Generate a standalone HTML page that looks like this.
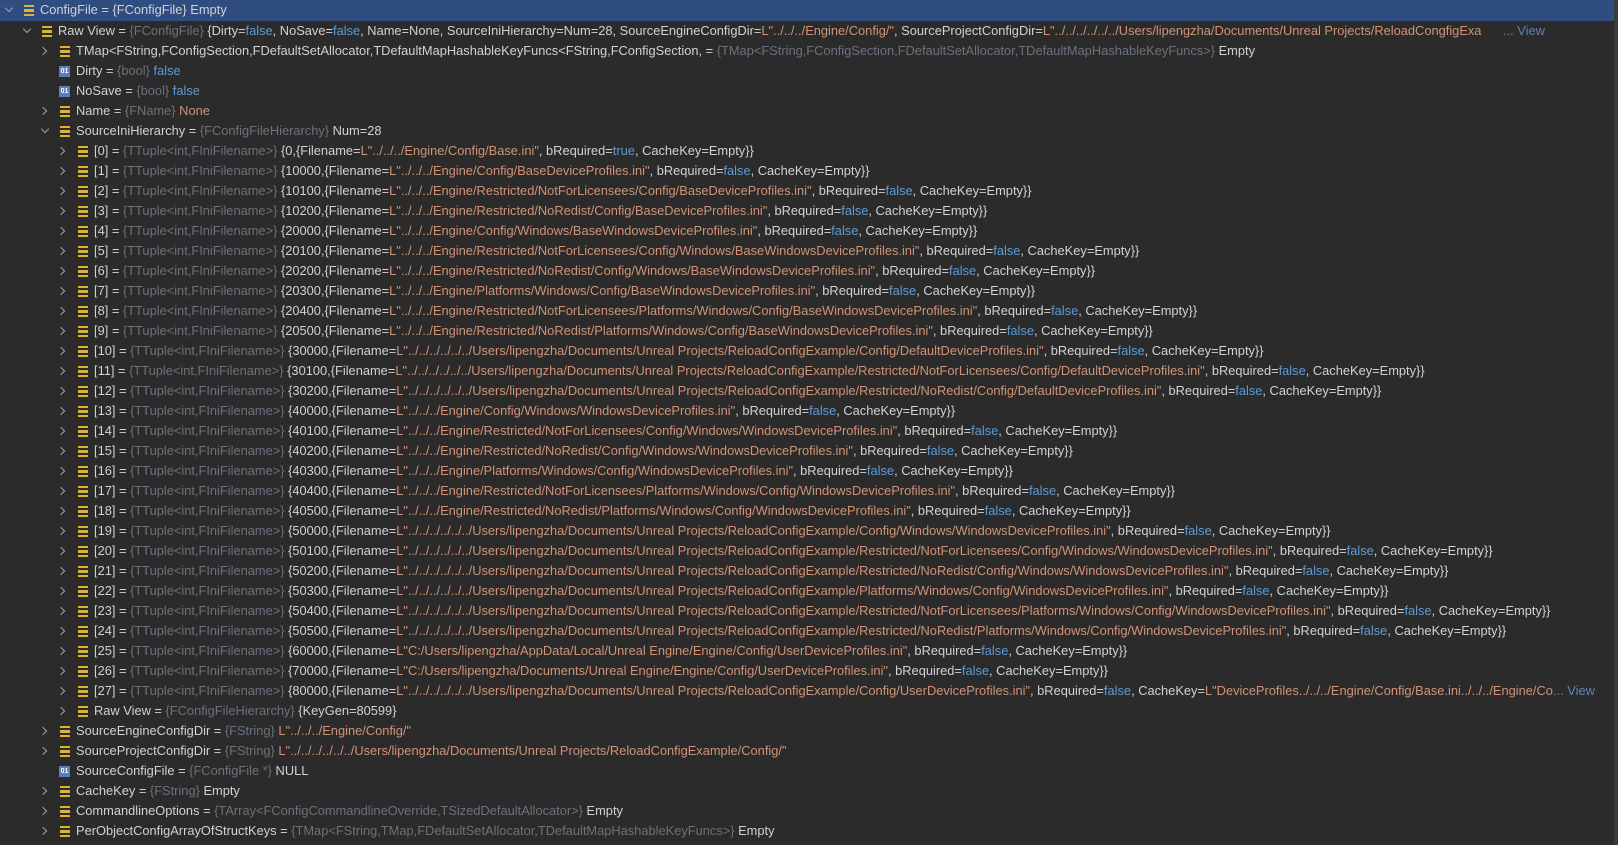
<!DOCTYPE html>
<html><head><meta charset="utf-8"><style>
html,body{margin:0;padding:0;background:#2b2b2b;width:1618px;height:845px;overflow:hidden}
body{font-family:"Liberation Sans","Noto Sans CJK SC",sans-serif;font-size:12.85px;color:#d2d2d2;position:relative}
.r{position:absolute;left:0;width:1614px;height:20px;line-height:20px;white-space:nowrap}
.sel{background:#2f4d80;height:21px;top:0}
.a{position:absolute;top:6px;width:7px;height:7px}
.a.c{border-right:1.5px solid #a0a0a0;border-bottom:1.5px solid #a0a0a0;transform:rotate(-45deg);width:5px;height:5px;top:7px}
.a.o{border-right:1.5px solid #a0a0a0;border-bottom:1.5px solid #a0a0a0;transform:rotate(45deg);width:5px;height:5px;top:5px}
.i{position:absolute;top:5px;width:10px;height:11px;background:linear-gradient(#d8b43a 0 2px,transparent 2px 4px,#d8b43a 4px 7px,transparent 7px 9px,#d8b43a 9px 11px)}
.b{position:absolute;top:5px;width:11px;height:11px;background:#5b7dbd;color:#fff;font-size:7px;line-height:11px;text-align:center;font-weight:bold}
.x{position:absolute;top:0}
.t{color:#6a727c}.k{color:#5e9bd4}.s{color:#cf9478}
.v{position:absolute;top:0;color:#5e84b3;padding-left:3px}
.edge{position:absolute;right:0;top:0;width:4px;height:845px;background:#3a3a3a}
</style></head><body>
<div class="r sel" style="top:0"><span class="a o" style="left:6px"></span><span class="i" style="left:24px"></span><span class="x" style="left:40px">ConfigFile = {FConfigFile} Empty</span></div>
<div class="r" style="top:21px"><span class="a o" style="left:24px"></span><span class="i" style="left:42px"></span><span class="x" style="left:58px;width:1446px;overflow:hidden">Raw View = <span class="t">{FConfigFile}</span> {Dirty=<span class="k">false</span>, NoSave=<span class="k">false</span>, Name=None, SourceIniHierarchy=Num=28, SourceEngineConfigDir=<span class="s">L"../../../Engine/Config/"</span>, SourceProjectConfigDir=<span class="s">L"../../../../../../Users/lipengzha/Documents/Unreal Projects/ReloadCongfigExa</span></span><span class="v" style="left:1500px">... View</span></div>
<div class="r" style="top:41px"><span class="a c" style="left:40px"></span><span class="i" style="left:60px"></span><span class="x" style="left:76px">TMap&lt;FString,FConfigSection,FDefaultSetAllocator,TDefaultMapHashableKeyFuncs&lt;FString,FConfigSection, = <span class="t">{TMap&lt;FString,FConfigSection,FDefaultSetAllocator,TDefaultMapHashableKeyFuncs&gt;}</span> Empty</span></div>
<div class="r" style="top:61px"><span class="b" style="left:59px">01</span><span class="x" style="left:76px">Dirty = <span class="t">{bool}</span> <span class="k">false</span></span></div>
<div class="r" style="top:81px"><span class="b" style="left:59px">01</span><span class="x" style="left:76px">NoSave = <span class="t">{bool}</span> <span class="k">false</span></span></div>
<div class="r" style="top:101px"><span class="a c" style="left:40px"></span><span class="i" style="left:60px"></span><span class="x" style="left:76px">Name = <span class="t">{FName}</span> <span class="s">None</span></span></div>
<div class="r" style="top:121px"><span class="a o" style="left:42px"></span><span class="i" style="left:60px"></span><span class="x" style="left:76px">SourceIniHierarchy = <span class="t">{FConfigFileHierarchy}</span> Num=28</span></div>
<div class="r" style="top:141px"><span class="a c" style="left:58px"></span><span class="i" style="left:78px"></span><span class="x" style="left:94px">[0] = <span class="t">{TTuple&lt;int,FIniFilename&gt;}</span> {0,{Filename=<span class="s">L"../../../Engine/Config/Base.ini"</span>, bRequired=<span class="k">true</span>, CacheKey=Empty}}</span></div>
<div class="r" style="top:161px"><span class="a c" style="left:58px"></span><span class="i" style="left:78px"></span><span class="x" style="left:94px">[1] = <span class="t">{TTuple&lt;int,FIniFilename&gt;}</span> {10000,{Filename=<span class="s">L"../../../Engine/Config/BaseDeviceProfiles.ini"</span>, bRequired=<span class="k">false</span>, CacheKey=Empty}}</span></div>
<div class="r" style="top:181px"><span class="a c" style="left:58px"></span><span class="i" style="left:78px"></span><span class="x" style="left:94px">[2] = <span class="t">{TTuple&lt;int,FIniFilename&gt;}</span> {10100,{Filename=<span class="s">L"../../../Engine/Restricted/NotForLicensees/Config/BaseDeviceProfiles.ini"</span>, bRequired=<span class="k">false</span>, CacheKey=Empty}}</span></div>
<div class="r" style="top:201px"><span class="a c" style="left:58px"></span><span class="i" style="left:78px"></span><span class="x" style="left:94px">[3] = <span class="t">{TTuple&lt;int,FIniFilename&gt;}</span> {10200,{Filename=<span class="s">L"../../../Engine/Restricted/NoRedist/Config/BaseDeviceProfiles.ini"</span>, bRequired=<span class="k">false</span>, CacheKey=Empty}}</span></div>
<div class="r" style="top:221px"><span class="a c" style="left:58px"></span><span class="i" style="left:78px"></span><span class="x" style="left:94px">[4] = <span class="t">{TTuple&lt;int,FIniFilename&gt;}</span> {20000,{Filename=<span class="s">L"../../../Engine/Config/Windows/BaseWindowsDeviceProfiles.ini"</span>, bRequired=<span class="k">false</span>, CacheKey=Empty}}</span></div>
<div class="r" style="top:241px"><span class="a c" style="left:58px"></span><span class="i" style="left:78px"></span><span class="x" style="left:94px">[5] = <span class="t">{TTuple&lt;int,FIniFilename&gt;}</span> {20100,{Filename=<span class="s">L"../../../Engine/Restricted/NotForLicensees/Config/Windows/BaseWindowsDeviceProfiles.ini"</span>, bRequired=<span class="k">false</span>, CacheKey=Empty}}</span></div>
<div class="r" style="top:261px"><span class="a c" style="left:58px"></span><span class="i" style="left:78px"></span><span class="x" style="left:94px">[6] = <span class="t">{TTuple&lt;int,FIniFilename&gt;}</span> {20200,{Filename=<span class="s">L"../../../Engine/Restricted/NoRedist/Config/Windows/BaseWindowsDeviceProfiles.ini"</span>, bRequired=<span class="k">false</span>, CacheKey=Empty}}</span></div>
<div class="r" style="top:281px"><span class="a c" style="left:58px"></span><span class="i" style="left:78px"></span><span class="x" style="left:94px">[7] = <span class="t">{TTuple&lt;int,FIniFilename&gt;}</span> {20300,{Filename=<span class="s">L"../../../Engine/Platforms/Windows/Config/BaseWindowsDeviceProfiles.ini"</span>, bRequired=<span class="k">false</span>, CacheKey=Empty}}</span></div>
<div class="r" style="top:301px"><span class="a c" style="left:58px"></span><span class="i" style="left:78px"></span><span class="x" style="left:94px">[8] = <span class="t">{TTuple&lt;int,FIniFilename&gt;}</span> {20400,{Filename=<span class="s">L"../../../Engine/Restricted/NotForLicensees/Platforms/Windows/Config/BaseWindowsDeviceProfiles.ini"</span>, bRequired=<span class="k">false</span>, CacheKey=Empty}}</span></div>
<div class="r" style="top:321px"><span class="a c" style="left:58px"></span><span class="i" style="left:78px"></span><span class="x" style="left:94px">[9] = <span class="t">{TTuple&lt;int,FIniFilename&gt;}</span> {20500,{Filename=<span class="s">L"../../../Engine/Restricted/NoRedist/Platforms/Windows/Config/BaseWindowsDeviceProfiles.ini"</span>, bRequired=<span class="k">false</span>, CacheKey=Empty}}</span></div>
<div class="r" style="top:341px"><span class="a c" style="left:58px"></span><span class="i" style="left:78px"></span><span class="x" style="left:94px">[10] = <span class="t">{TTuple&lt;int,FIniFilename&gt;}</span> {30000,{Filename=<span class="s">L"../../../../../../Users/lipengzha/Documents/Unreal Projects/ReloadConfigExample/Config/DefaultDeviceProfiles.ini"</span>, bRequired=<span class="k">false</span>, CacheKey=Empty}}</span></div>
<div class="r" style="top:361px"><span class="a c" style="left:58px"></span><span class="i" style="left:78px"></span><span class="x" style="left:94px">[11] = <span class="t">{TTuple&lt;int,FIniFilename&gt;}</span> {30100,{Filename=<span class="s">L"../../../../../../Users/lipengzha/Documents/Unreal Projects/ReloadConfigExample/Restricted/NotForLicensees/Config/DefaultDeviceProfiles.ini"</span>, bRequired=<span class="k">false</span>, CacheKey=Empty}}</span></div>
<div class="r" style="top:381px"><span class="a c" style="left:58px"></span><span class="i" style="left:78px"></span><span class="x" style="left:94px">[12] = <span class="t">{TTuple&lt;int,FIniFilename&gt;}</span> {30200,{Filename=<span class="s">L"../../../../../../Users/lipengzha/Documents/Unreal Projects/ReloadConfigExample/Restricted/NoRedist/Config/DefaultDeviceProfiles.ini"</span>, bRequired=<span class="k">false</span>, CacheKey=Empty}}</span></div>
<div class="r" style="top:401px"><span class="a c" style="left:58px"></span><span class="i" style="left:78px"></span><span class="x" style="left:94px">[13] = <span class="t">{TTuple&lt;int,FIniFilename&gt;}</span> {40000,{Filename=<span class="s">L"../../../Engine/Config/Windows/WindowsDeviceProfiles.ini"</span>, bRequired=<span class="k">false</span>, CacheKey=Empty}}</span></div>
<div class="r" style="top:421px"><span class="a c" style="left:58px"></span><span class="i" style="left:78px"></span><span class="x" style="left:94px">[14] = <span class="t">{TTuple&lt;int,FIniFilename&gt;}</span> {40100,{Filename=<span class="s">L"../../../Engine/Restricted/NotForLicensees/Config/Windows/WindowsDeviceProfiles.ini"</span>, bRequired=<span class="k">false</span>, CacheKey=Empty}}</span></div>
<div class="r" style="top:441px"><span class="a c" style="left:58px"></span><span class="i" style="left:78px"></span><span class="x" style="left:94px">[15] = <span class="t">{TTuple&lt;int,FIniFilename&gt;}</span> {40200,{Filename=<span class="s">L"../../../Engine/Restricted/NoRedist/Config/Windows/WindowsDeviceProfiles.ini"</span>, bRequired=<span class="k">false</span>, CacheKey=Empty}}</span></div>
<div class="r" style="top:461px"><span class="a c" style="left:58px"></span><span class="i" style="left:78px"></span><span class="x" style="left:94px">[16] = <span class="t">{TTuple&lt;int,FIniFilename&gt;}</span> {40300,{Filename=<span class="s">L"../../../Engine/Platforms/Windows/Config/WindowsDeviceProfiles.ini"</span>, bRequired=<span class="k">false</span>, CacheKey=Empty}}</span></div>
<div class="r" style="top:481px"><span class="a c" style="left:58px"></span><span class="i" style="left:78px"></span><span class="x" style="left:94px">[17] = <span class="t">{TTuple&lt;int,FIniFilename&gt;}</span> {40400,{Filename=<span class="s">L"../../../Engine/Restricted/NotForLicensees/Platforms/Windows/Config/WindowsDeviceProfiles.ini"</span>, bRequired=<span class="k">false</span>, CacheKey=Empty}}</span></div>
<div class="r" style="top:501px"><span class="a c" style="left:58px"></span><span class="i" style="left:78px"></span><span class="x" style="left:94px">[18] = <span class="t">{TTuple&lt;int,FIniFilename&gt;}</span> {40500,{Filename=<span class="s">L"../../../Engine/Restricted/NoRedist/Platforms/Windows/Config/WindowsDeviceProfiles.ini"</span>, bRequired=<span class="k">false</span>, CacheKey=Empty}}</span></div>
<div class="r" style="top:521px"><span class="a c" style="left:58px"></span><span class="i" style="left:78px"></span><span class="x" style="left:94px">[19] = <span class="t">{TTuple&lt;int,FIniFilename&gt;}</span> {50000,{Filename=<span class="s">L"../../../../../../Users/lipengzha/Documents/Unreal Projects/ReloadConfigExample/Config/Windows/WindowsDeviceProfiles.ini"</span>, bRequired=<span class="k">false</span>, CacheKey=Empty}}</span></div>
<div class="r" style="top:541px"><span class="a c" style="left:58px"></span><span class="i" style="left:78px"></span><span class="x" style="left:94px">[20] = <span class="t">{TTuple&lt;int,FIniFilename&gt;}</span> {50100,{Filename=<span class="s">L"../../../../../../Users/lipengzha/Documents/Unreal Projects/ReloadConfigExample/Restricted/NotForLicensees/Config/Windows/WindowsDeviceProfiles.ini"</span>, bRequired=<span class="k">false</span>, CacheKey=Empty}}</span></div>
<div class="r" style="top:561px"><span class="a c" style="left:58px"></span><span class="i" style="left:78px"></span><span class="x" style="left:94px">[21] = <span class="t">{TTuple&lt;int,FIniFilename&gt;}</span> {50200,{Filename=<span class="s">L"../../../../../../Users/lipengzha/Documents/Unreal Projects/ReloadConfigExample/Restricted/NoRedist/Config/Windows/WindowsDeviceProfiles.ini"</span>, bRequired=<span class="k">false</span>, CacheKey=Empty}}</span></div>
<div class="r" style="top:581px"><span class="a c" style="left:58px"></span><span class="i" style="left:78px"></span><span class="x" style="left:94px">[22] = <span class="t">{TTuple&lt;int,FIniFilename&gt;}</span> {50300,{Filename=<span class="s">L"../../../../../../Users/lipengzha/Documents/Unreal Projects/ReloadConfigExample/Platforms/Windows/Config/WindowsDeviceProfiles.ini"</span>, bRequired=<span class="k">false</span>, CacheKey=Empty}}</span></div>
<div class="r" style="top:601px"><span class="a c" style="left:58px"></span><span class="i" style="left:78px"></span><span class="x" style="left:94px">[23] = <span class="t">{TTuple&lt;int,FIniFilename&gt;}</span> {50400,{Filename=<span class="s">L"../../../../../../Users/lipengzha/Documents/Unreal Projects/ReloadConfigExample/Restricted/NotForLicensees/Platforms/Windows/Config/WindowsDeviceProfiles.ini"</span>, bRequired=<span class="k">false</span>, CacheKey=Empty}}</span></div>
<div class="r" style="top:621px"><span class="a c" style="left:58px"></span><span class="i" style="left:78px"></span><span class="x" style="left:94px">[24] = <span class="t">{TTuple&lt;int,FIniFilename&gt;}</span> {50500,{Filename=<span class="s">L"../../../../../../Users/lipengzha/Documents/Unreal Projects/ReloadConfigExample/Restricted/NoRedist/Platforms/Windows/Config/WindowsDeviceProfiles.ini"</span>, bRequired=<span class="k">false</span>, CacheKey=Empty}}</span></div>
<div class="r" style="top:641px"><span class="a c" style="left:58px"></span><span class="i" style="left:78px"></span><span class="x" style="left:94px">[25] = <span class="t">{TTuple&lt;int,FIniFilename&gt;}</span> {60000,{Filename=<span class="s">L"C:/Users/lipengzha/AppData/Local/Unreal Engine/Engine/Config/UserDeviceProfiles.ini"</span>, bRequired=<span class="k">false</span>, CacheKey=Empty}}</span></div>
<div class="r" style="top:661px"><span class="a c" style="left:58px"></span><span class="i" style="left:78px"></span><span class="x" style="left:94px">[26] = <span class="t">{TTuple&lt;int,FIniFilename&gt;}</span> {70000,{Filename=<span class="s">L"C:/Users/lipengzha/Documents/Unreal Engine/Engine/Config/UserDeviceProfiles.ini"</span>, bRequired=<span class="k">false</span>, CacheKey=Empty}}</span></div>
<div class="r" style="top:681px"><span class="a c" style="left:58px"></span><span class="i" style="left:78px"></span><span class="x" style="left:94px;width:1460px;overflow:hidden">[27] = <span class="t">{TTuple&lt;int,FIniFilename&gt;}</span> {80000,{Filename=<span class="s">L"../../../../../../Users/lipengzha/Documents/Unreal Projects/ReloadConfigExample/Config/UserDeviceProfiles.ini"</span>, bRequired=<span class="k">false</span>, CacheKey=<span class="s">L"DeviceProfiles../../../Engine/Config/Base.ini../../../Engine/Co</span></span><span class="v" style="left:1553px;padding-left:0">... View</span></div>
<div class="r" style="top:701px"><span class="a c" style="left:58px"></span><span class="i" style="left:78px"></span><span class="x" style="left:94px">Raw View = <span class="t">{FConfigFileHierarchy}</span> {KeyGen=80599}</span></div>
<div class="r" style="top:721px"><span class="a c" style="left:40px"></span><span class="i" style="left:60px"></span><span class="x" style="left:76px">SourceEngineConfigDir = <span class="t">{FString}</span> <span class="s">L"../../../Engine/Config/"</span></span></div>
<div class="r" style="top:741px"><span class="a c" style="left:40px"></span><span class="i" style="left:60px"></span><span class="x" style="left:76px">SourceProjectConfigDir = <span class="t">{FString}</span> <span class="s">L"../../../../../../Users/lipengzha/Documents/Unreal Projects/ReloadConfigExample/Config/"</span></span></div>
<div class="r" style="top:761px"><span class="b" style="left:59px">01</span><span class="x" style="left:76px">SourceConfigFile = <span class="t">{FConfigFile *}</span> NULL</span></div>
<div class="r" style="top:781px"><span class="a c" style="left:40px"></span><span class="i" style="left:60px"></span><span class="x" style="left:76px">CacheKey = <span class="t">{FString}</span> Empty</span></div>
<div class="r" style="top:801px"><span class="a c" style="left:40px"></span><span class="i" style="left:60px"></span><span class="x" style="left:76px">CommandlineOptions = <span class="t">{TArray&lt;FConfigCommandlineOverride,TSizedDefaultAllocator&gt;}</span> Empty</span></div>
<div class="r" style="top:821px"><span class="a c" style="left:40px"></span><span class="i" style="left:60px"></span><span class="x" style="left:76px">PerObjectConfigArrayOfStructKeys = <span class="t">{TMap&lt;FString,TMap,FDefaultSetAllocator,TDefaultMapHashableKeyFuncs&gt;}</span> Empty</span></div>
<div class="edge"></div>
</body></html>
